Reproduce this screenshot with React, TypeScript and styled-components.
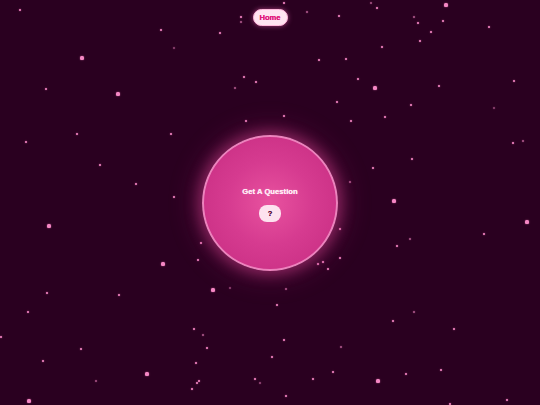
import React from "react";
import styled, { createGlobalStyle } from "styled-components";

const GlobalStyle = createGlobalStyle`
  html, body {
    margin: 0;
    padding: 0;
    background: #2a0020;
    font-family: "Liberation Sans", Arial, sans-serif;
  }
  * { box-sizing: border-box; }
`;

const Page = styled.div`
  position: relative;
  width: 100vw;
  height: 100vh;
  overflow: hidden;
  background: #2a0020;
  display: flex;
  flex-direction: column;
`;

const Sky = styled.div`
  position: absolute;
  inset: 0;
  pointer-events: none;
`;

const Star = styled.span<{ $size: number; $alpha: number }>`
  position: absolute;
  width: ${(p) => p.$size}px;
  height: ${(p) => p.$size}px;
  margin: ${(p) => -p.$size / 2}px 0 0 ${(p) => -p.$size / 2}px;
  border-radius: 50%;
  background: #f587c4;
  box-shadow: 0 0 1.5px rgba(245, 120, 190, 0.8);
  opacity: ${(p) => p.$alpha};
`;

const Header = styled.header`
  position: relative;
  z-index: 1;
  display: flex;
  justify-content: center;
  padding-top: 8.5px;
  height: 26px;
`;

const HomeButton = styled.button`
  width: 35px;
  height: 17.5px;
  border: 1px solid #ffb8dc;
  border-radius: 9px;
  background: #ffe4f1;
  color: #e01c7c;
  font-family: "Liberation Sans", Arial, sans-serif;
  font-weight: 700;
  font-size: 7.6px;
  padding: 0;
  display: flex;
  align-items: center;
  justify-content: center;
  text-shadow: 0 0 0.4px #e01c7c;
  box-shadow: 0 0 5px rgba(255, 110, 190, 0.55);
  cursor: pointer;
`;

const Main = styled.main`
  position: relative;
  z-index: 1;
  flex: 1;
  display: flex;
  align-items: center;
  justify-content: center;
  padding-bottom: 26px;
`;

const Orb = styled.div`
  width: 136px;
  height: 136px;
  border-radius: 50%;
  border: 2px solid rgba(240, 140, 195, 0.9);
  background: radial-gradient(circle at 50% 50%, #e8529f 0%, #d63b90 45%, #c52b80 100%);
  box-shadow: 0 0 14px 4px rgba(225, 70, 150, 0.45), 0 0 28px 8px rgba(200, 40, 130, 0.2);
  display: flex;
  flex-direction: column;
  align-items: center;
  justify-content: center;
  gap: 9px;
  padding-top: 4px;
`;

const Title = styled.div`
  color: #ffe8f4;
  font-family: "Liberation Sans", Arial, sans-serif;
  font-weight: 700;
  font-size: 7.6px;
  line-height: 9px;
  letter-spacing: 0.05px;
  text-shadow: 0 0 0.5px #ffe8f4, 0 0 2px rgba(255, 200, 230, 0.4);
`;

const AskButton = styled.button`
  width: 22px;
  height: 17px;
  border: none;
  border-radius: 8px;
  background: #fde2ef;
  color: #5a1040;
  font-family: "Liberation Sans", Arial, sans-serif;
  font-weight: 700;
  font-size: 7.5px;
  padding: 0;
  display: flex;
  align-items: center;
  justify-content: center;
  text-shadow: 0 0 0.4px #5a1040;
  cursor: pointer;
`;

type S = [number, number, number, number?];

const stars: S[] = [
  [20, 10, 1.5], [161, 30, 2], [174, 48, 1.5, 0.5], [82, 58, 2.5], [46, 89, 1.5], [118, 94, 2.5], [77, 134, 2], [171, 134, 2],
  [284, 3, 2], [241, 17, 2], [241, 22, 1, 0.6], [307, 12, 1, 0.6], [339, 16, 1.5], [220, 33, 2], [319, 60, 2], [346, 59, 1.5],
  [244, 77, 2], [256, 82, 2], [235, 88, 1, 0.6], [358, 79, 1.5], [337, 102, 2], [284, 116, 2], [246, 121, 2], [351, 121, 1.5],
  [371, 3, 1.5, 0.6], [377, 8, 2], [446, 5, 2.5], [414, 17, 1, 0.6], [418, 23, 2], [443, 21, 1.5], [431, 32, 1.5], [489, 27, 2],
  [420, 41, 2], [382, 47, 2], [514, 81, 2], [375, 88, 2.5], [439, 86, 2], [411, 105, 2], [494, 108, 1.5, 0.5], [385, 117, 1.5],
  [26, 142, 1.5], [100, 165, 2], [136, 184, 1.5], [174, 197, 1.5], [49, 226, 2.5], [163, 264, 2.5], [198, 260, 1.5], [201, 243, 1.5],
  [513, 143, 1.5], [523, 141, 1, 0.6], [412, 159, 2], [373, 168, 2], [350, 182, 1, 0.6], [394, 201, 2.5], [527, 222, 2.5],
  [484, 234, 2], [410, 239, 1, 0.6], [397, 246, 2], [340, 229, 2], [340, 258, 1.5], [323, 262, 2], [318, 264, 2], [328, 269, 1.5],
  [47, 293, 1.5], [119, 295, 2], [28, 312, 2], [1, 337, 2], [81, 349, 1.5], [43, 361, 1.5], [96, 381, 1.5, 0.6], [147, 374, 2.5], [29, 401, 2.5],
  [213, 290, 2.5], [230, 288, 1.5, 0.5], [286, 289, 1, 0.6], [277, 305, 2], [194, 329, 1.5], [203, 335, 1, 0.6], [207, 348, 1.5],
  [284, 340, 2], [272, 357, 2], [341, 347, 1, 0.6], [196, 363, 2], [199, 381, 2], [197, 383, 2], [192, 389, 1.5], [255, 379, 2],
  [260, 383, 1, 0.5], [313, 379, 1.5], [333, 372, 1.5], [286, 396, 2],
  [414, 312, 1, 0.6], [393, 321, 2], [454, 329, 1.5], [406, 374, 1.5], [378, 381, 2.5], [441, 370, 1.5], [507, 400, 1.5], [450, 404, 1.5],
];

export default function App() {
  return (
    <>
      <GlobalStyle />
      <Page>
        <Sky>
          {stars.map(([x, y, s, a], i) => (
            <Star key={i} $size={s + 0.6} $alpha={a ?? 1} style={{ left: x, top: y }} />
          ))}
        </Sky>
        <Header>
          <HomeButton>Home</HomeButton>
        </Header>
        <Main>
          <Orb>
            <Title>Get A Question</Title>
            <AskButton>?</AskButton>
          </Orb>
        </Main>
      </Page>
    </>
  );
}
